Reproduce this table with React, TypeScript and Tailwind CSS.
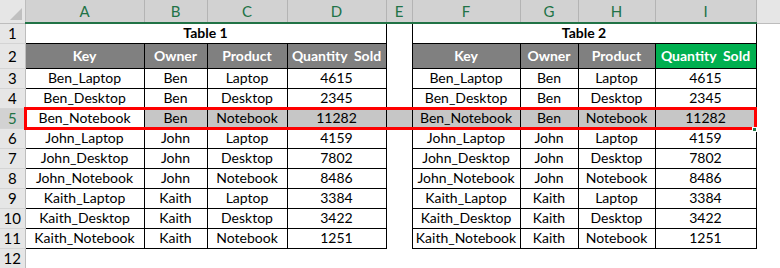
import React from "react";

const rows = [
  ["Ben_Laptop", "Ben", "Laptop", "4615"],
  ["Ben_Desktop", "Ben", "Desktop", "2345"],
  ["Ben_Notebook", "Ben", "Notebook", "11282"],
  ["John_Laptop", "John", "Laptop", "4159"],
  ["John_Desktop", "John", "Desktop", "7802"],
  ["John_Notebook", "John", "Notebook", "8486"],
  ["Kaith_Laptop", "Kaith", "Laptop", "3384"],
  ["Kaith_Desktop", "Kaith", "Desktop", "3422"],
  ["Kaith_Notebook", "Kaith", "Notebook", "1251"],
];

const letters = ["A", "B", "C", "D", "E", "F", "G", "H", "I"];
const widths = [25, 119, 63, 80, 99, 26, 108, 58, 77, 101, 24];

function RowHead({ n, active }: { n: number; active?: boolean }) {
  return (
    <td
      className={
        "border-r border-b border-r-[#bdbdbd] border-b-[#d4d4d4] text-center text-[15px] p-0 " +
        (active ? "bg-[#d2d2d2] text-[#217346]" : "bg-[#e6e6e6] text-black")
      }
    >
      {n}
    </td>
  );
}

export default function App() {
  return (
    <div
      className="relative w-[780px] h-[268px] overflow-hidden bg-white"
      style={{ fontFamily: "Lato, 'Liberation Sans', sans-serif" }}
    >
      <table className="table-fixed border-collapse w-[780px] text-[14px] leading-[16px] text-black">
        <colgroup>
          {widths.map((w, i) => (
            <col key={i} style={{ width: w }} />
          ))}
        </colgroup>
        <tbody>
          <tr className="h-[23px]">
            <td className="bg-[#e6e6e6] border-r border-r-[#bdbdbd] border-b border-b-[#bdbdbd] p-0 relative">
              <div className="absolute right-[3px] bottom-[3px] w-0 h-0 border-l-[12px] border-l-transparent border-b-[12px] border-b-[#c0c0c0]" />
            </td>
            {letters.map((l) => (
              <td
                key={l}
                className="bg-[#d2d2d2] text-[#217346] text-center text-[15px] p-0 border-r border-r-[#b4b4b4] border-b-2 border-b-[#217346]"
              >
                {l}
              </td>
            ))}
            <td className="bg-[#e6e6e6] border-b border-b-[#bdbdbd] p-0" />
          </tr>

          <tr className="h-[20px]">
            <RowHead n={1} />
            <td colSpan={4} className="border-l border-r border-black text-center font-bold p-0">
              Table 1
            </td>
            <td className="p-0" />
            <td colSpan={4} className="border-l border-r border-black text-center font-bold p-0">
              Table 2
            </td>
            <td className="p-0" />
          </tr>

          <tr className="h-[25px]">
            <RowHead n={2} />
            {["Key", "Owner", "Product", "Quantity  Sold"].map((h) => (
              <td key={"a" + h} className="border border-black bg-[#808080] text-white font-bold text-center p-0 whitespace-pre">
                {h}
              </td>
            ))}
            <td className="p-0" />
            {["Key", "Owner", "Product", "Quantity  Sold"].map((h, i) => (
              <td
                key={"b" + h}
                className={
                  "border border-black text-white font-bold text-center p-0 whitespace-pre " +
                  (i === 3 ? "bg-[#00b050]" : "bg-[#808080]")
                }
              >
                {h}
              </td>
            ))}
            <td className="p-0" />
          </tr>

          {rows.map((r, ri) => {
            const sel = ri === 2;
            const bg = sel ? "bg-[#c6c6c6]" : "";
            return (
              <tr key={ri} className="h-[20px]">
                <RowHead n={ri + 3} active={sel} />
                {r.map((c, ci) => (
                  <td key={"a" + ci} className={"border border-black text-center p-0 " + (ci > 0 ? bg : "")}>
                    {c}
                  </td>
                ))}
                <td className={"p-0 " + bg} />
                {r.map((c, ci) => (
                  <td key={"b" + ci} className={"border border-black text-center p-0 " + bg}>
                    {c}
                  </td>
                ))}
                <td className="p-0" />
              </tr>
            );
          })}

          <tr className="h-[20px]">
            <RowHead n={12} />
            <td colSpan={10} className="p-0" />
          </tr>
        </tbody>
      </table>

      {/* highlight box drawn over row 5 */}
      <div className="absolute left-[24px] top-[107px] w-[733px] h-[23px] border-[3px] border-[#ff0000] pointer-events-none" />
      <div className="absolute left-[752px] top-[127px] w-[5px] h-[5px] bg-[#217346] border border-white" />
    </div>
  );
}
